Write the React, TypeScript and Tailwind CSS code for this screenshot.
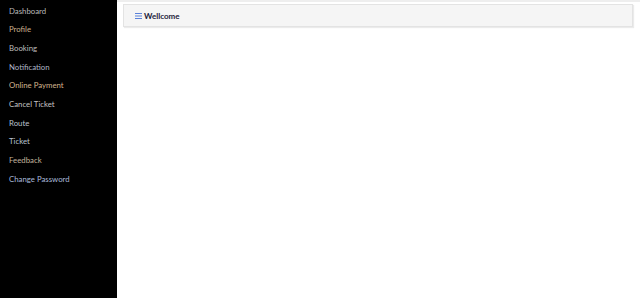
import React from "react";

const items: { label: string; color: string }[] = [
  { label: "Dashboard", color: "text-[#b9b9b9]" },
  { label: "Profile", color: "text-[#cbb08e]" },
  { label: "Booking", color: "text-[#bdbdbd]" },
  { label: "Notification", color: "text-[#aeb6c6]" },
  { label: "Online Payment", color: "text-[#d2b48f]" },
  { label: "Cancel Ticket", color: "text-[#c4c4c4]" },
  { label: "Route", color: "text-[#bcc3cf]" },
  { label: "Ticket", color: "text-[#b9c3d2]" },
  { label: "Feedback", color: "text-[#c2b49e]" },
  { label: "Change Password", color: "text-[#a9badb]" },
];

export default function App() {
  return (
    <div className="flex h-[298px] w-[640px] bg-white font-['Lato',sans-serif]">
      <aside className="flex w-[117px] shrink-0 flex-col bg-black pt-[2px]">
        {items.map((it) => (
          <div
            key={it.label}
            className={`flex h-[18.7px] items-center pl-[9px] text-[7.8px] ${it.color}`}
          >
            {it.label}
          </div>
        ))}
      </aside>
      <main className="flex-1 border-t-2 border-[#eeeeee] px-[6px] pt-[2px]">
        <div className="flex h-[23px] w-[510px] items-center border border-[#e3e3e3] bg-[#f5f5f5] pl-[11px] shadow-[1px_1px_1px_rgba(0,0,0,0.08)]">
          <svg width="7" height="6" viewBox="0 0 7 6" className="mr-[2px]">
            <rect x="0" y="0" width="7" height="1" fill="#5b82d9" />
            <rect x="0" y="2.5" width="7" height="1" fill="#5b82d9" />
            <rect x="0" y="5" width="7" height="1" fill="#5b82d9" />
          </svg>
          <span className="text-[8px] font-bold text-[#1c1c3a]">Wellcome</span>
        </div>
      </main>
    </div>
  );
}
